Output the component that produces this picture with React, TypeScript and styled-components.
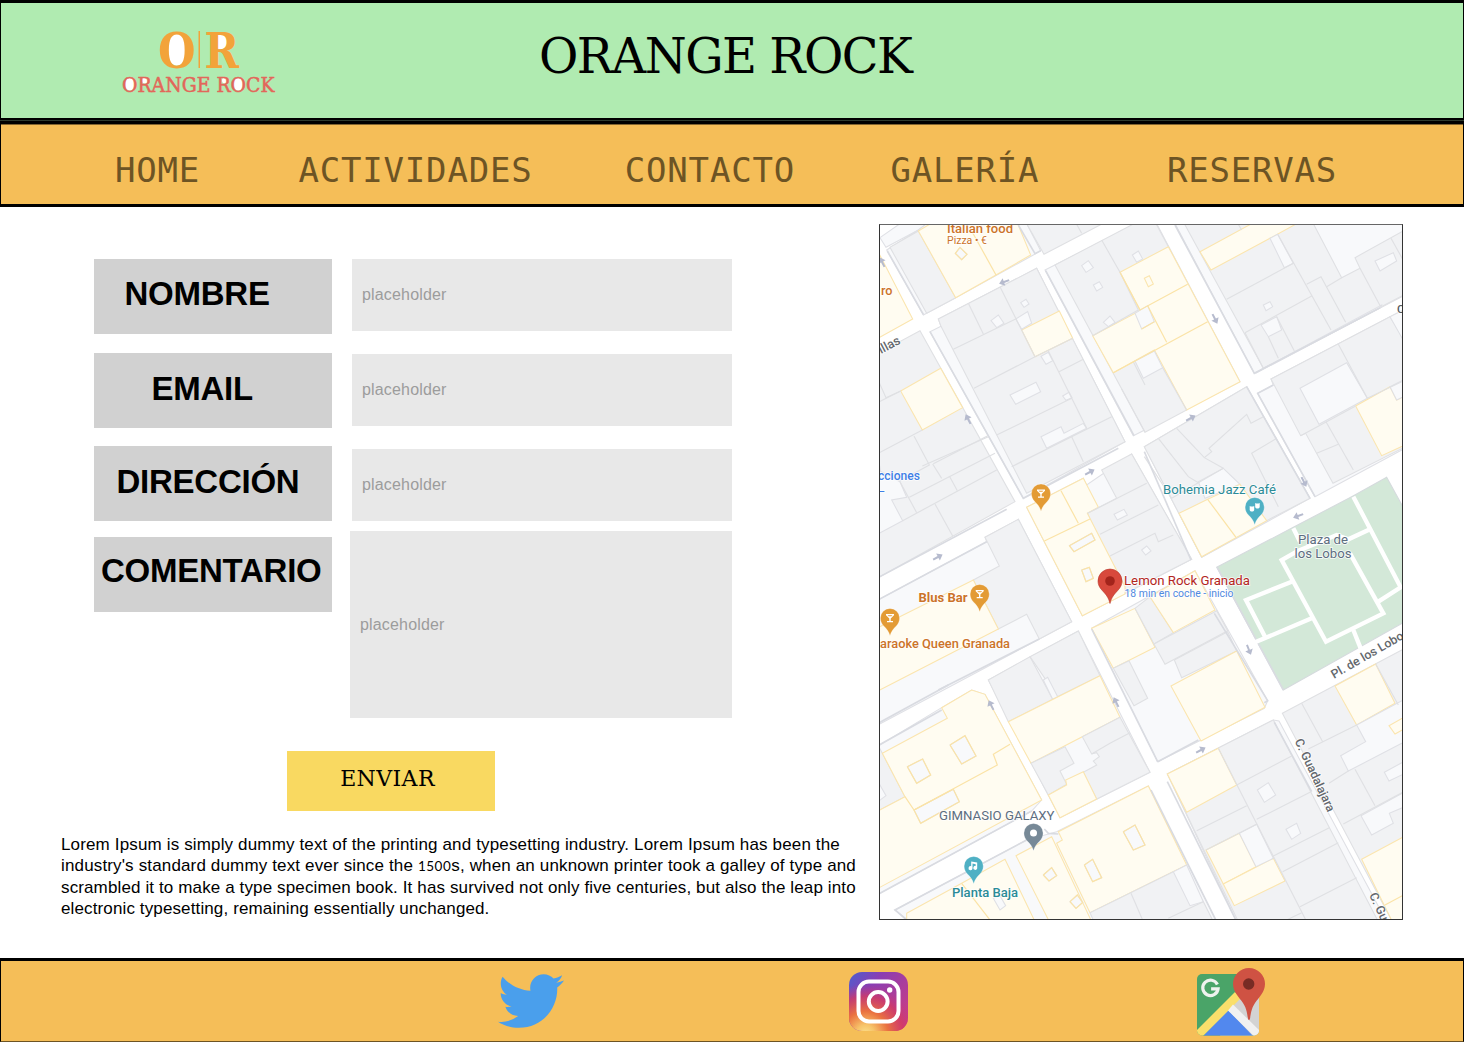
import React from "react";
import styled, { createGlobalStyle } from "styled-components";
import { FaTwitter } from "react-icons/fa";

const GlobalStyle = createGlobalStyle`
  *, *::before, *::after { box-sizing: border-box; }
  body { margin: 0; background: #fff; overflow: hidden; }
`;

const sans = `"Liberation Sans", Arial, sans-serif`;
const slab = `"DejaVu Serif", serif`;

const Page = styled.div`
  width: 1464px;
  height: 1042px;
  display: flex;
  flex-direction: column;
  background: #fff;
  color: #000;
  font-family: ${sans};
`;

const Header = styled.header`
  height: 121px;
  flex: none;
  display: flex;
  align-items: flex-start;
  background: #b0ebb1;
  border: solid #000;
  border-width: 3px 1px 3px 1px;
  padding-left: 120px;
`;

const Logo = styled.svg`
  display: block;
  width: 156px;
  height: 70px;
  margin-top: 25px;
`;

const Title = styled.h1`
  margin: 25px 0 0 262px;
  font-family: ${slab};
  font-weight: 400;
  font-size: 48px;
  line-height: 56px;
  letter-spacing: -1.5px;
  white-space: nowrap;
`;

const Nav = styled.nav`
  height: 86px;
  flex: none;
  display: flex;
  align-items: flex-start;
  background: #f5be58;
  border: solid #000;
  border-width: 3px 1px 3px 1px;
  box-shadow: inset 0 1px 0 #836530, 0 -1px 0 #2e3a2e;
  padding: 26px 0 0 114px;
`;

const NavLink = styled.a<{ $width: number }>`
  width: ${(p) => p.$width}px;
  flex: none;
  font-family: "DejaVu Sans Mono", monospace;
  font-size: 34px;
  line-height: 40px;
  letter-spacing: 0.8px;
  color: #6d5424;
  white-space: nowrap;
`;

const Main = styled.main`
  height: 751px;
  flex: none;
  display: flex;
  align-items: flex-start;
`;

const LeftColumn = styled.section`
  width: 879px;
  flex: none;
  padding-top: 52px;
  display: flex;
  flex-direction: column;
`;

const Form = styled.div`
  display: flex;
  height: 459px;
  padding-left: 94px;
`;

const Labels = styled.div`
  width: 256px;
  display: flex;
  flex-direction: column;
`;

const Label = styled.label<{ $indent: number; $drop: number; $gap: number }>`
  width: 237.5px;
  height: 75.3px;
  flex: none;
  margin-bottom: ${(p) => p.$gap}px;
  padding: ${(p) => p.$drop}px 0 0 ${(p) => p.$indent}px;
  background: #d1d1d1;
  font-size: 33px;
  line-height: 38px;
  font-weight: 700;
  letter-spacing: -0.25px;
  white-space: nowrap;
`;

const Fields = styled.div`
  width: 382px;
  display: flex;
  flex-direction: column;
  align-items: flex-end;
`;

const Field = styled.div<{ $width: number; $height: number; $gap: number }>`
  width: ${(p) => p.$width}px;
  height: ${(p) => p.$height}px;
  flex: none;
  margin-bottom: ${(p) => p.$gap}px;
  display: flex;
  align-items: center;
  padding-left: 10px;
  background: #e8e8e8;
  color: #9c9c9c;
  font-size: 16px;
  letter-spacing: 0.17px;
`;

const Submit = styled.button`
  width: 208px;
  height: 60px;
  margin: 33px 0 0 287px;
  padding: 0 7px 5px 0;
  border: 0;
  background: #f9d961;
  color: #000;
  font-family: ${slab};
  font-size: 22px;
  letter-spacing: 0.4px;
`;

const Copy = styled.p`
  margin: 23px 0 0 61px;
  font-size: 17px;
  line-height: 21.3px;
  white-space: nowrap;
`;

const CopyLine = styled.span<{ $spacing: number }>`
  display: block;
  height: 21.3px;
  letter-spacing: ${(p) => p.$spacing}px;
`;

const Digits = styled.span`
  font-family: Lato, sans-serif;
  font-size: 13.5px;
  line-height: 1;
  letter-spacing: 0.5px;
`;

const MapFrame = styled.figure`
  width: 524px;
  height: 696px;
  margin: 17px 0 0;
  border: 1px solid #333;
  border-top-color: #666;
  overflow: hidden;
`;

const MapDrawing = styled.svg`
  display: block;
  width: 522px;
  height: 694px;
`;

const Footer = styled.footer`
  height: 84px;
  flex: none;
  display: flex;
  align-items: flex-start;
  background: #f5be58;
  border: solid #000;
  border-width: 3px 1px 1px 1px;
  border-bottom-color: #6d5424;
`;

const SocialLink = styled.a<{ $left: number; $top: number }>`
  display: block;
  flex: none;
  line-height: 0;
  margin: ${(p) => p.$top}px 0 0 ${(p) => p.$left}px;
`;

/* ---------- map data ---------- */

/* The map is stored in six sheets at triple scale; each has its own origin. */
const sheets = {
  A: [870, 215],
  B: [1135, 215],
  C: [870, 450],
  D: [1135, 450],
  E: [870, 685],
  F: [1135, 685],
} as const;
type Sheet = keyof typeof sheets;

/* l: open land, g: building, y: highlighted building, p: park */
type Kind = "l" | "g" | "y" | "p";
const paint: Record<Kind, [string, string]> = {
  l: ["#f8f9fb", "#dfe0e5"],
  g: ["#f1f2f4", "#dfe0e3"],
  y: ["#fffcf1", "#fbe5ae"],
  p: ["#d3e8d8", "#d5dadd"],
};

const areas: [Sheet, Kind, string][] = [
  // north-west corner
  ["A", "l", "30,68 48,97 145,45 170,26 90,26"],
  ["A", "l", "50,105 145,45 170,26 470,26 512,107 490,120 257,248 160,300"],
  ["A", "g", "60,97 145,48 257,248 170,295"],
  ["A", "y", "145,48 182,26 443,26 482,120 378,180 257,248"],
  ["A", "l", "270,97 291,118 275,134 256,115"],
  ["A", "y", "24,110 50,160 128,312 24,370"],
  ["A", "g", "470,26 522,118 690,30 700,22"],
  // west block
  ["A", "g", "24,415 150,347 435,860 24,1088"],
  ["A", "y", "92,528 212,460 278,578 157,645"],
  ["C", "l", "24,20 52,182 24,198"],
  ["C", "l", "24,60 90,95 110,142 65,150 98,212 24,252"],
  // centre north block
  ["A", "l", "180,350 213,334 205,312 500,160 765,680 460,850"],
  ["A", "g", "213,334 205,312 500,160 765,680 470,835"],
  ["A", "y", "455,345 568,288 608,370 495,425"],
  ["A", "l", "437,312 473,290 485,325 455,343"],
  ["A", "l", "513,665 573,635 582,655 640,625 650,640 530,700"],
  ["A", "l", "420,540 498,502 512,530 437,568"],
  ["A", "l", "363,317 385,300 402,325 380,338"],
  ["A", "l", "452,263 468,253 477,267 462,277"],
  ["A", "l", "513,424 535,412 548,437 528,448"],
  ["A", "l", "578,543 597,532 606,548 588,556"],
  // north block
  ["A", "l", "525,165 800,26 860,26 1110,500 790,662"],
  ["A", "g", "555,150 800,22 858,26 895,95 950,585 825,652"],
  ["B", "y", "-45,172 100,95 315,500 155,585 58,405 -65,473 -127,362 10,290 15,285"],
  ["B", "l", "0,295 38,272 58,320 20,342"],
  ["B", "y", "28,190 43,182 55,207 40,215"],
  ["B", "l", "0,438 58,408 83,458 25,490"],
  ["A", "l", "635,152 655,137 670,158 648,172"],
  ["A", "l", "670,210 688,200 698,217 680,228"],
  ["A", "l", "700,322 720,303 735,322 715,335"],
  ["A", "l", "787,120 805,108 818,132 800,142"],
  // north-east block
  ["B", "l", "120,26 810,26 810,240 358,475"],
  ["B", "g", "148,26 535,26 620,188 675,160 660,128 810,45 810,238 385,460"],
  ["B", "y", "195,110 350,26 485,26 405,70 228,165"],
  ["B", "l", "405,70 428,58 475,145 448,158"],
  ["B", "l", "720,138 775,113 785,138 735,168"],
  ["B", "l", "385,270 405,260 413,275 393,287"],
  ["B", "l", "378,330 425,305 440,345 400,365"],
  ["B", "l", "385,460 740,270 738,277 362,475"],
  // east block
  ["B", "l", "368,535 415,510 408,492 810,282 810,700 540,845"],
  ["B", "g", "408,492 765,305 810,380 810,696 594,805 512,655 497,662"],
  ["B", "l", "765,305 810,282 810,385"],
  ["B", "l", "495,520 635,443 697,550 552,628"],
  ["B", "y", "662,573 765,515 785,555 810,543 810,690 740,722"],
  ["B", "l", "765,515 810,492 810,543 785,555"],
  // Bohemia block
  ["D", "l", "28,-10 335,-190 525,145 200,322"],
  ["D", "g", "28,-10 335,-190 525,145 395,212 200,322"],
  ["D", "l", "210,145 190,95 265,55 315,103"],
  ["D", "y", "132,190 218,148 315,103 395,212 200,320"],
  // Lemon Rock block
  ["C", "l", "470,172 640,85 650,105 785,12 965,328 637,497"],
  ["C", "g", "695,60 785,12 965,328 765,430 652,190 740,145"],
  ["C", "y", "470,172 640,85 685,172 652,190 765,410 765,432 637,497"],
  ["C", "l", "598,287 665,250 675,270 612,305"],
  ["C", "l", "635,360 658,352 670,385 648,395"],
  ["C", "l", "732,193 762,178 772,195 742,210"],
  ["D", "l", "20,300 35,288 48,303 32,315"],
  // Blus Bar block
  ["C", "l", "24,450 350,275 345,262 445,208 605,515 24,825"],
  ["C", "g", "345,262 445,208 605,515 508,567 470,493 385,537 310,390 388,348"],
  ["C", "y", "24,533 310,390 385,537 24,723"],
  // south centre block
  ["E", "l", "355,-15 625,-162 840,262 570,398"],
  ["E", "g", "355,-15 480,-85 548,43 415,110"],
  ["E", "g", "480,-85 625,-162 690,-28 562,35"],
  ["E", "l", "520,-15 533,-23 563,35 548,43"],
  ["E", "y", "415,110 690,-28 750,97 483,235"],
  ["E", "g", "483,235 585,185 612,235 570,258 590,298 535,330"],
  ["E", "g", "637,155 750,97 840,262 680,342 640,262 680,240 670,228 688,215 680,203 665,207"],
  ["E", "y", "535,330 590,300 587,285 640,260 680,342 570,398"],
  // south east centre block
  ["D", "l", "-130,535 180,362 398,752 388,775 68,935"],
  ["D", "y", "-130,535 0,475 60,592 -65,655"],
  ["D", "g", "0,475 45,440 115,548 57,582"],
  ["D", "y", "45,440 180,362 240,480 115,548"],
  ["D", "g", "57,582 245,482 278,542 90,643"],
  ["D", "g", "118,630 278,545 305,603 140,683"],
  ["D", "y", "108,708 305,603 390,772 198,873"],
  ["D", "g", "-65,655 -18,632 38,745 -3,767"],
  // plaza
  ["D", "p", "245,352 475,232 650,140 755,82 810,182 810,515 445,720"],
  // south-east block
  ["F", "g", "442,85 810,-110 810,710 772,710"],
  ["F", "y", "600,3 722,-63 780,55 665,120"],
  ["F", "l", "665,120 810,42 810,170 640,258 617,212 692,170"],
  ["F", "y", "762,122 810,95 810,130 780,147"],
  ["F", "l", "678,392 810,320 810,365 763,385 775,415 710,450"],
  ["F", "l", "748,262 810,228 810,265 762,288"],
  ["F", "y", "680,523 810,453 810,710 772,710"],
  // Guadalajara block
  ["F", "l", "97,267 415,105 432,108 755,710 305,710"],
  ["F", "g", "97,267 415,105 730,710 310,710"],
  ["F", "y", "97,267 250,190 305,300 155,382"],
  ["F", "y", "213,495 313,445 363,545 265,597"],
  ["F", "y", "265,597 415,520 450,588 298,662"],
  ["F", "l", "313,445 365,418 415,520 363,545"],
  ["F", "l", "367,315 400,293 422,330 388,352"],
  ["F", "l", "453,433 485,415 497,445 470,463"],
  // south block
  ["E", "l", "75,675 470,465 560,440 835,303 1040,710 120,710"],
  ["E", "y", "110,685 275,595 405,523 495,710 110,710"],
  ["E", "y", "438,512 545,455 665,710 538,710"],
  ["E", "y", "565,440 835,303 950,540 660,683 560,475 577,465"],
  ["E", "g", "660,683 910,560 1000,650 1030,710 672,710"],
  ["F", "l", "115,560 155,540 205,650 165,662"],
  ["E", "l", "520,570 545,548 560,572 537,588"],
  ["E", "l", "643,540 668,523 695,578 668,590"],
  ["E", "l", "760,440 795,420 825,480 790,495"],
  ["E", "l", "600,650 622,630 638,652 618,670"],
  ["E", "l", "370,640 390,632 407,662 390,675"],
  // south-west block
  ["E", "l", "24,183 215,68 305,15 345,28 515,345 485,378 24,628"],
  ["E", "g", "24,180 37,205 105,335 24,378"],
  ["E", "l", "24,290 48,332 24,350"],
  ["E", "y", "37,205 232,100 215,68 305,15 345,28 515,345 24,610 24,378 105,335"],
  ["E", "l", "132,375 250,313 268,350 152,415"],
  ["E", "l", "240,180 285,152 318,213 275,237"],
  ["E", "l", "112,245 158,222 182,270 140,295"],
];

/* G: grey wall, Y: yellow wall, S: dark kerb, W: footpath */
type LineKind = "G" | "Y" | "S" | "W";
const strokes: Record<LineKind, [string, number]> = {
  G: ["#dfe0e3", 3.4],
  Y: ["#fbe3a6", 3.6],
  S: ["#d9dbe1", 5],
  W: ["#ffffff", 13],
};

const lines: [Sheet, LineKind, string][] = [
  ["A", "Y", "305,48 378,180"],
  ["A", "S", "52,108 160,298"],
  ["A", "S", "445,30 495,116 512,107"],
  ["A", "G", "620,28 635,55"],
  ["A", "G", "24,562 92,528"],
  ["A", "G", "24,495 48,548 92,528"],
  ["A", "G", "157,645 24,715"],
  ["A", "G", "132,663 178,750 90,798"],
  ["A", "G", "190,746 352,663"],
  ["C", "G", "157,48 355,-40"],
  ["C", "G", "188,42 215,85"],
  ["C", "G", "118,142 375,10"],
  ["C", "G", "90,95 140,188"],
  ["C", "G", "238,78 262,122"],
  ["C", "G", "98,212 380,60"],
  ["C", "G", "195,162 248,258"],
  ["C", "S", "24,383 410,178"],
  ["A", "S", "180,350 460,850 745,700"],
  ["A", "G", "295,265 340,357"],
  ["A", "G", "390,215 495,425 312,520"],
  ["A", "G", "437,312 250,403"],
  ["A", "G", "495,425 608,370"],
  ["A", "G", "535,408 650,640"],
  ["A", "G", "567,470 640,433"],
  ["A", "G", "380,660 605,550"],
  ["A", "G", "425,755 725,605"],
  ["A", "G", "605,665 640,740"],
  ["A", "S", "527,167 792,662"],
  ["A", "G", "695,75 750,172 805,285 668,362"],
  ["A", "G", "790,440 825,510"],
  ["B", "Y", "-45,172 15,285 158,208"],
  ["B", "Y", "38,272 95,382"],
  ["B", "Y", "20,342 58,320"],
  ["B", "Y", "-65,473 218,320"],
  ["B", "G", "-40,522 30,652"],
  ["B", "G", "83,458 155,585"],
  ["B", "S", "120,30 358,475 735,278"],
  ["B", "G", "310,28 320,45"],
  ["B", "G", "275,253 475,145"],
  ["B", "G", "330,353 530,243"],
  ["B", "G", "428,58 588,345"],
  ["B", "G", "515,208 558,185 632,322"],
  ["B", "G", "575,215 620,188"],
  ["B", "G", "675,160 737,275"],
  ["B", "G", "768,70 810,145"],
  ["B", "G", "400,365 430,430"],
  ["B", "G", "425,305 478,408"],
  ["B", "G", "330,353 385,460"],
  ["B", "S", "540,845 368,535 415,510"],
  ["B", "G", "610,388 697,550 800,500"],
  ["B", "G", "497,662 662,573"],
  ["B", "G", "573,620 655,765"],
  ["B", "G", "545,715 610,688"],
  ["D", "G", "70,-35 160,80 190,98"],
  ["D", "G", "125,-65 208,23 265,55"],
  ["D", "G", "208,23 230,5 222,-5 335,-107 348,-80 385,-100"],
  ["D", "G", "28,20 110,145 265,55"],
  ["D", "G", "425,-35 350,10 430,170"],
  ["D", "Y", "218,148 303,262"],
  ["D", "S", "335,-190 525,145"],
  ["C", "Y", "573,122 625,220"],
  ["C", "Y", "523,273 660,207"],
  ["C", "G", "652,190 830,100"],
  ["C", "G", "690,253 865,165"],
  ["C", "G", "720,318 855,250 865,275 910,255"],
  ["D", "S", "28,5 168,330"],
  ["C", "S", "24,450 350,275"],
  ["C", "S", "205,720 508,567"],
  ["C", "S", "665,537 863,935"],
  ["E", "G", "665,207 720,175 780,143"],
  ["D", "S", "238,490 398,752 388,758"],
  ["D", "S", "68,935 190,870"],
  ["D", "S", "247,352 445,720"],
  // plaza footpaths
  ["D", "W", "475,235 495,275"],
  ["D", "W", "490,302 440,330 573,575 745,490 645,310"],
  ["D", "W", "490,302 605,255 640,268 705,238"],
  ["D", "W", "655,140 797,412 730,455"],
  ["D", "W", "470,395 333,450 390,560"],
  ["D", "W", "360,577 530,505"],
  ["D", "W", "655,540 677,595"],
  ["F", "G", "500,55 563,170"],
  ["F", "G", "520,192 665,120"],
  ["F", "G", "582,295 640,258"],
  ["F", "G", "660,253 720,362"],
  ["F", "G", "625,417 810,318"],
  ["F", "G", "722,-63 790,60"],
  ["F", "Y", "750,660 810,628"],
  ["F", "S", "97,290 305,710"],
  ["F", "S", "418,112 530,320"],
  ["F", "G", "250,190 515,710"],
  ["F", "G", "305,300 470,213"],
  ["F", "G", "185,437 335,362"],
  ["F", "G", "365,403 528,320"],
  ["F", "G", "213,495 365,418"],
  ["F", "G", "415,513 583,428"],
  ["F", "G", "443,560 610,473"],
  ["F", "G", "495,665 665,578"],
  ["F", "G", "455,705 500,683"],
  ["F", "S", "48,315 245,710"],
  ["F", "G", "100,700 205,650"],
  ["F", "G", "-12,625 25,710"],
  ["E", "Y", "275,595 360,705"],
  ["E", "Y", "520,570 545,548 560,572 537,588 520,570"],
  ["E", "Y", "643,540 668,523 695,578 668,590 643,540"],
  ["E", "Y", "760,440 795,420 825,480 790,495 760,440"],
  ["E", "Y", "600,650 622,630 638,652 618,670 600,650"],
  ["E", "Y", "240,180 285,152 318,213 275,237 240,180"],
  ["E", "Y", "112,245 158,222 182,270 140,295 112,245"],
  ["E", "Y", "132,375 250,313 268,350 152,415 132,375"],
  ["C", "Y", "598,287 665,250 675,270 612,305 598,287"],
  ["C", "Y", "635,360 658,352 670,385 648,395 635,360"],
  ["A", "Y", "270,97 291,118 275,134 256,115 270,97"],
  ["E", "S", "24,115 235,0"],
  ["E", "S", "24,182 215,75"],
  ["E", "S", "24,628 485,378"],
  ["E", "S", "110,705 75,675 470,465"],
  ["E", "S", "523,432 535,445 565,447"],
  ["E", "Y", "420,178 370,208 382,240 132,375 105,335"],
];

const place = (sheet: Sheet) =>
  `translate(${sheets[sheet][0]} ${sheets[sheet][1]}) scale(0.33333)`;

const arrows: [number, number, number][] = [
  [1004, 282, 160],
  [882, 262, -117],
  [968, 419, -117],
  [1215, 319, 63],
  [1191, 418, -28],
  [938, 557, -28],
  [1090, 472, -28],
  [1304, 482, 63],
  [1298, 516, 160],
  [1249, 650, 68],
  [991, 705, -117],
  [1116, 702, -117],
  [1201, 750, -28],
];

type Place = {
  text: string;
  x: number;
  y: number;
  w?: number;
  size?: number;
  color: string;
  weight?: number;
  turn?: number;
  anchor?: "start" | "middle" | "end";
};

const orange = "#cc7329";
const teal = "#2b8b97";
const slate = "#5c6d7f";
const street = "#63676c";

const places: Place[] = [
  { text: "Italian food", x: 947, y: 233, w: 66, color: orange, weight: 500 },
  { text: "Pizza • €", x: 947, y: 244, w: 40, size: 10, color: orange },
  { text: "ro", x: 881, y: 295, w: 11.5, color: orange, weight: 500 },
  { text: "illas", x: 881, y: 354, w: 23, color: street, turn: -28, weight: 500 },
  { text: "C", x: 1397, y: 313, color: "#55595e", size: 11.5, weight: 500 },
  { text: "cciones", x: 878, y: 479.5, w: 42, color: "#3f7fe6", weight: 500 },
  { text: "–", x: 877, y: 496, color: "#3f7fe6" },
  { text: "Bohemia Jazz Café", x: 1163, y: 493.5, w: 113, color: teal },
  { text: "Lemon Rock Granada", x: 1124, y: 585, w: 126, size: 13, color: "#b3261e" },
  { text: "18 min en coche - inicio", x: 1124.5, y: 596.5, w: 109, size: 10.3, color: "#5089e0" },
  { text: "Blus Bar", x: 918.5, y: 602, w: 49, color: orange, weight: 700 },
  { text: "Karaoke Queen Granada", x: 1010, y: 648, w: 138, color: orange, anchor: "end", weight: 500 },
  { text: "Plaza de", x: 1298, y: 544, w: 50, color: slate },
  { text: "los Lobos", x: 1294.5, y: 557.5, w: 57, color: slate },
  { text: "GIMNASIO GALAXY", x: 939, y: 819.8, w: 115.5, color: slate },
  { text: "Planta Baja", x: 952, y: 897, w: 66, color: teal, weight: 500 },
  { text: "Pl. de los Lobos", x: 1334, y: 679, w: 88, color: street, turn: -30, size: 12.3, weight: 500 },
  { text: "C. Guadalajara", x: 1294.5, y: 741, w: 79, color: street, turn: 65, size: 12.3, weight: 500 },
  { text: "C. Guadalajara", x: 1369, y: 895, w: 79, color: street, turn: 65, size: 12.3, weight: 500 },
];

const Pin = ({ x, y, fill, children }: { x: number; y: number; fill: string; children?: React.ReactNode }) => (
  <g transform={`translate(${x} ${y})`}>
    <path
      d="M0 17.8C-1.200 13.500-3.500 10.800-6.300 8C-8.500 5.800-9.600 3-9.600 0A9.600 9.600 0 0 1 9.600 0C9.600 3 8.500 5.800 6.300 8C3.500 10.800 1.200 13.500 0 17.800Z"
      fill={fill}
      stroke="#fff"
      strokeOpacity="0.5"
      strokeWidth="0.6"
    />
    {children}
  </g>
);

const Glass = () => (
  <path d="M-4-4H4V-2.800L.7.600V3H3V4.200H-3V3H-.7V.600L-4-2.800ZM-2.400-2.800L-1.400-1.800H1.400L2.400-2.800Z" fill="#fff" fillRule="evenodd" />
);

const CityMap = () => (
  <MapDrawing viewBox="880 225 522 694">
    <rect x="880" y="225" width="522" height="694" fill="#fff" />
    {areas.map(([sheet, kind, points], i) => (
      <polygon
        key={i}
        transform={place(sheet)}
        points={points}
        fill={paint[kind][0]}
        stroke={paint[kind][1]}
        strokeWidth="3.2"
      />
    ))}
    {lines.map(([sheet, kind, points], i) => (
      <polyline
        key={i}
        transform={place(sheet)}
        points={points}
        fill="none"
        stroke={strokes[kind][0]}
        strokeWidth={strokes[kind][1]}
      />
    ))}
    {arrows.map(([x, y, turn], i) => (
      <g key={i} transform={`translate(${x} ${y}) rotate(${turn})`}>
        <path d="M-5.500-1H0V-4L5.200 0L0 4V1H-5.500Z" fill="#b6bbce" />
      </g>
    ))}
    <Pin x={1041} y={493.5} fill="#e39b35"><Glass /></Pin>
    <Pin x={979.7} y={594} fill="#e39b35"><Glass /></Pin>
    <Pin x={890} y={618} fill="#e39b35"><Glass /></Pin>
    <Pin x={1254.7} y={507} fill="#4fb0c4">
      <path d="M-5-1C-3.500-.3-2-.3-.5-1V3C-1 5-4.500 5-5 3ZM.5-4C2-3.300 3.500-3.300 5-4V0C4.500 2 1 2 .5 0Z" fill="#fff" />
    </Pin>
    <Pin x={973.7} y={866} fill="#4fb0c4">
      <path d="M-2.500-4.500L3.500-3.500V2.500A2 2 0 1 1 2-.1V-1.800L-1.200-2.400V2.300A2 2 0 1 1-2.500.300Z" fill="#fff" />
    </Pin>
    <Pin x={1033.5} y={833} fill="#778997"><circle r="3.500" fill="#fff" /></Pin>
    {places.map((p, i) => (
      <text
        key={i}
        x={p.x}
        y={p.y}
        fill={p.color}
        fontSize={p.size ?? 12.8}
        fontWeight={p.weight ?? 400}
        fontFamily="Roboto, sans-serif"
        textAnchor={p.anchor ?? "start"}
        textLength={p.w}
        lengthAdjust="spacingAndGlyphs"
        stroke="#fff"
        strokeWidth="1.6"
        strokeOpacity="0.85"
        paintOrder="stroke"
        transform={p.turn ? `rotate(${p.turn} ${p.x} ${p.y})` : undefined}
      >
        {p.text}
      </text>
    ))}
    <g transform="translate(1110 581)">
      <path
        d="M0 22.500C-1.500 16-4.500 13-8 9.200C-10.800 6.200-12 3.200-12 0A12 12 0 0 1 12 0C12 3.200 10.800 6.200 8 9.200C4.500 13 1.500 16 0 22.500Z"
        fill="#d8493c"
        stroke="#b9382d"
        strokeWidth="0.6"
      />
      <circle r="4.800" fill="#a3241b" />
    </g>
  </MapDrawing>
);

/* ---------- brand marks ---------- */

const BrandLogo = () => (
  <Logo viewBox="120 28 156 70">
    <ellipse cx="176" cy="49.500" rx="11" ry="16" fill="#fff" />
    <rect x="212" y="34" width="15" height="15" rx="6" fill="#fff" />
    <ellipse cx="129" cy="84" rx="5.500" ry="6.500" fill="#fff" />
    <ellipse cx="237.500" cy="84" rx="5.500" ry="6.500" fill="#fff" />
    <ellipse cx="144" cy="80.500" rx="3" ry="3" fill="#fff" />
    <ellipse cx="224" cy="80.500" rx="3" ry="3" fill="#fff" />
    <g fill="#f2a33a" fontFamily={`"DejaVu Serif Condensed", "DejaVu Serif", serif`} fontWeight="700" fontSize="49">
      <text x="157" y="67.500" textLength="37.500" lengthAdjust="spacingAndGlyphs">O</text>
      <text x="203.500" y="67.500" textLength="34.500" lengthAdjust="spacingAndGlyphs">R</text>
    </g>
    <rect x="197.500" y="31" width="1.500" height="37" fill="#f2a33a" />
    <text
      x="121"
      y="91.500"
      fill="#e2675a"
      stroke="#e2675a"
      strokeWidth="0.500"
      fontFamily={`"DejaVu Serif Condensed", "DejaVu Serif", serif`}
      fontSize="20.500"
      textLength="152.500"
      lengthAdjust="spacingAndGlyphs"
    >
      ORANGE ROCK
    </text>
  </Logo>
);

const InstagramMark = () => (
  <svg width="59" height="59" viewBox="0 0 59 59">
    <defs>
      <linearGradient id="ig-base" x1="0" y1="0" x2="1" y2="0.800">
        <stop offset="0" stopColor="#4b5fd0" />
        <stop offset="0.350" stopColor="#8a3db3" />
        <stop offset="1" stopColor="#cc3d83" />
      </linearGradient>
      <radialGradient id="ig-warm" cx="0.280" cy="1.050" r="0.850">
        <stop offset="0" stopColor="#fbe08c" />
        <stop offset="0.180" stopColor="#f7c46a" />
        <stop offset="0.450" stopColor="#ea7240" />
        <stop offset="0.750" stopColor="#d33b62" stopOpacity="0.800" />
        <stop offset="1" stopColor="#c13584" stopOpacity="0" />
      </radialGradient>
    </defs>
    <rect width="59" height="59" rx="13" fill="url(#ig-base)" />
    <rect width="59" height="59" rx="13" fill="url(#ig-warm)" />
    <rect x="9.500" y="9.500" width="40" height="40" rx="10.500" fill="none" stroke="#fff" strokeWidth="4" />
    <circle cx="29.200" cy="29.500" r="9.400" fill="none" stroke="#fff" strokeWidth="4" />
    <circle cx="40.700" cy="18" r="2.700" fill="#fff" />
  </svg>
);

const MapsMark = () => (
  <svg width="70" height="68" viewBox="1197 968 70 68">
    <defs>
      <clipPath id="maps-tile">
        <rect x="1197" y="974" width="62" height="61.500" rx="5" />
      </clipPath>
    </defs>
    <g clipPath="url(#maps-tile)">
      <rect x="1197" y="974" width="62" height="62" fill="#4aa468" />
      <path d="M1228 1010L1259 979V1036H1220Z" fill="#d3d3d3" />
      <path d="M1203 1036L1228 1010L1253 1036Z" fill="#5288ee" />
      <path d="M1194 1033L1235 992L1241 998L1200 1039Z" fill="#fadf6b" />
      <path d="M1228 1010.500L1233 1004.500L1262 1033L1257 1039Z" fill="#f1f1f1" />
    </g>
    <path
      d="M1217.800 984.500A7.700 7.700 0 1 0 1218.500 988.800H1211.500"
      fill="none"
      stroke="#eef2ee"
      strokeWidth="3.200"
      transform="translate(-.400 0)"
    />
    <path
      d="M1249 1020C1247 1020 1248.500 1011 1243 1003C1239 997 1233 992 1233 984A16 16 0 0 1 1265 984C1265 992 1259 997 1255 1003C1249.500 1011 1251 1020 1249 1020Z"
      fill="#cf5243"
    />
    <circle cx="1248.700" cy="984" r="5.700" fill="#782b24" />
  </svg>
);

const navItems = [
  { text: "HOME", width: 183.5 },
  { text: "ACTIVIDADES", width: 326.3 },
  { text: "CONTACTO", width: 265.7 },
  { text: "GALERÍA", width: 276.5 },
  { text: "RESERVAS", width: 180 },
];

const labels = [
  { text: "NOMBRE", indent: 30.5, drop: 16, gap: 18.4 },
  { text: "EMAIL", indent: 57.5, drop: 17, gap: 17.7 },
  { text: "DIRECCIÓN", indent: 22.5, drop: 17, gap: 15.6 },
  { text: "COMENTARIO", indent: 7, drop: 15, gap: 0 },
];

const fields = [
  { width: 380, height: 72.3, gap: 22.7 },
  { width: 380, height: 72.3, gap: 22.7 },
  { width: 380, height: 72.3, gap: 10.2 },
  { width: 382, height: 186.5, gap: 0 },
];

export default function App() {
  return (
    <>
      <GlobalStyle />
      <Page>
        <Header>
          <BrandLogo />
          <Title>ORANGE ROCK</Title>
        </Header>
        <Nav>
          {navItems.map((item) => (
            <NavLink key={item.text} $width={item.width}>{item.text}</NavLink>
          ))}
        </Nav>
        <Main>
          <LeftColumn>
            <Form>
              <Labels>
                {labels.map((l) => (
                  <Label key={l.text} $indent={l.indent} $drop={l.drop} $gap={l.gap}>{l.text}</Label>
                ))}
              </Labels>
              <Fields>
                {fields.map((f, i) => (
                  <Field key={i} $width={f.width} $height={f.height} $gap={f.gap}>placeholder</Field>
                ))}
              </Fields>
            </Form>
            <Submit>ENVIAR</Submit>
            <Copy>
              <CopyLine $spacing={0.15}>Lorem Ipsum is simply dummy text of the printing and typesetting industry. Lorem Ipsum has been the</CopyLine>
              <CopyLine $spacing={0.15}>industry's standard dummy text ever since the <Digits>1500</Digits>s, when an unknown printer took a galley of type and</CopyLine>
              <CopyLine $spacing={0.125}>scrambled it to make a type specimen book. It has survived not only five centuries, but also the leap into</CopyLine>
              <CopyLine $spacing={0.125}>electronic typesetting, remaining essentially unchanged.</CopyLine>
            </Copy>
          </LeftColumn>
          <MapFrame>
            <CityMap />
          </MapFrame>
        </Main>
        <Footer>
          <SocialLink $left={497} $top={7}>
            <FaTwitter size={66} color="#4a9fec" />
          </SocialLink>
          <SocialLink $left={285} $top={11}>
            <InstagramMark />
          </SocialLink>
          <SocialLink $left={289} $top={7}>
            <MapsMark />
          </SocialLink>
        </Footer>
      </Page>
    </>
  );
}
